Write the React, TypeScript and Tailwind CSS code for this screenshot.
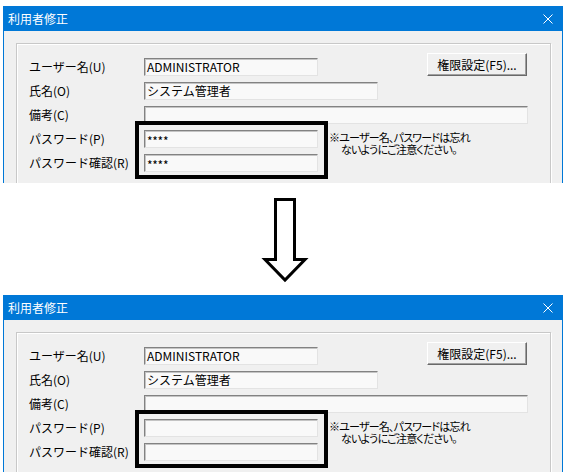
import React from "react";

const font = "font-['Noto_Sans_CJK_JP','Noto_Sans',sans-serif]";

function Field({ w, value, stars }: { w: string; value?: string; stars?: boolean }) {
  return (
    <div
      className={`h-[18px] ${w} bg-[#f9f9f9] border border-t-[#828282] border-l-[#828282] border-r-[#e3e3e3] border-b-[#e3e3e3] shadow-[inset_1px_1px_0_#c4c4c4] flex items-center pl-[2px] text-[12px] leading-none whitespace-nowrap overflow-hidden`}
    >
      {stars ? <span className="text-[12px] tracking-[-0.3px] pt-[3px]">****</span> : value}
    </div>
  );
}

function Label({ children }: { children: React.ReactNode }) {
  return <div className="w-[115px] h-[18px] flex items-center text-[12px] leading-none whitespace-nowrap">{children}</div>;
}

function Dialog({ filled }: { filled: boolean }) {
  return (
    <div className="relative w-[560px] h-[177px] overflow-hidden flex flex-col">
      <div className="h-[25px] shrink-0 bg-[#0078d7] flex items-center justify-between pl-[5px] pr-[10px] text-white text-[12px]">
        <span>利用者修正</span>
        <svg width="10" height="10" viewBox="0 0 10 10">
          <path d="M0.5 0.5 L9.5 9.5 M9.5 0.5 L0.5 9.5" stroke="white" strokeWidth="1" />
        </svg>
      </div>
      <div className="flex-1 border-x border-[#0078d7] bg-[#f0f0f0] pt-[12px] pl-[12px] pr-[11px]">
        <div className="h-[200px] border border-[#c8c8c8] shadow-[inset_1px_1px_0_#fff,1px_1px_0_#fff] pt-[9px] pl-[12px] pr-[21px]">
          <div className="flex items-end h-[23px]">
            <Label>ユーザー名(U)</Label>
            <Field w="w-[174px]" value="ADMINISTRATOR" />
            <button className="ml-auto mr-[2px] w-[100px] h-[23px] bg-[#f0f0f0] border border-t-white border-l-white border-b-[#696969] border-r-[#696969] shadow-[inset_-1px_-1px_0_#a0a0a0] text-[12px] leading-none">
              権限設定(F5)...
            </button>
          </div>
          <div className="flex items-center mt-[6px]">
            <Label>氏名(O)</Label>
            <Field w="w-[234px]" value="システム管理者" />
          </div>
          <div className="flex items-center mt-[6px]">
            <Label>備考(C)</Label>
            <Field w="w-[384px]" />
          </div>
          <div className="flex mt-[6px]">
            <div className="flex flex-col gap-[6px]">
              <div className="flex items-center">
                <Label>パスワード(P)</Label>
                <Field w="w-[174px]" stars={filled} />
              </div>
              <div className="flex items-center">
                <Label>パスワード確認(R)</Label>
                <Field w="w-[174px]" stars={filled} />
              </div>
            </div>
            <div className="ml-[11px] pt-[1px] text-[11px] leading-[12px] tracking-[-0.8px] [font-feature-settings:'palt'] whitespace-nowrap">
              <div>※ユーザー名、パスワードは忘れ</div>
              <div className="pl-[12px]">ないようにご注意ください。</div>
            </div>
          </div>
        </div>
      </div>
      <div className="absolute left-[132px] top-[115px] w-[193px] h-[58px] border-4 border-black" />
    </div>
  );
}

export default function App() {
  return (
    <div className={`w-[575px] h-[474px] bg-white pt-[6px] pl-[3px] text-black ${font}`}>
      <Dialog filled />
      <div className="h-[112px] pl-[258px]">
        <svg width="48" height="112" viewBox="0 0 48 112">
          <polygon
            points="14.5,16.5 33.5,16.5 33.5,76.5 44,76.5 24,97 4,76.5 14.5,76.5"
            fill="white"
            stroke="black"
            strokeWidth="3"
            strokeLinejoin="miter"
          />
        </svg>
      </div>
      <Dialog filled={false} />
    </div>
  );
}
